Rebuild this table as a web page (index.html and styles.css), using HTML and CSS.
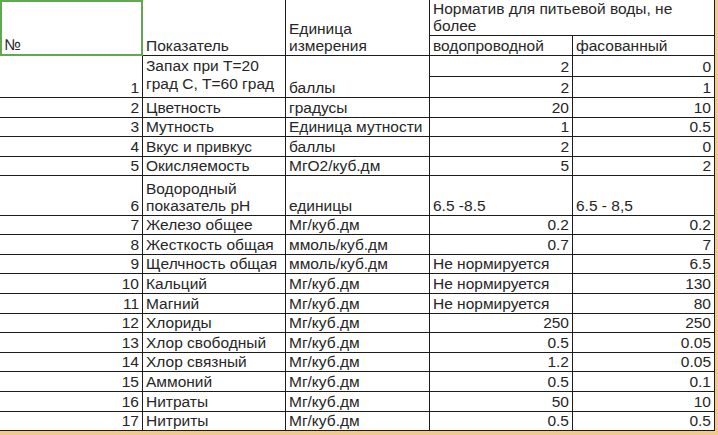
FILE: index.html
```html
<!DOCTYPE html>
<html lang="ru">
<head>
<meta charset="utf-8">
<title>Нормативы питьевой воды</title>
<link rel="stylesheet" href="styles.css">
</head>
<body>
<div class="sheet">
<table class="grid">
<colgroup>
<col class="c1"><col class="c2"><col class="c3"><col class="c4"><col class="c5">
</colgroup>
<tbody>
<tr class="h-top">
  <td class="sel" rowspan="2">№</td>
  <td class="txt" rowspan="2">Показатель</td>
  <td class="txt" rowspan="2">Единица<br>измерения</td>
  <td class="txt norm" colspan="2">Норматив для питьевой воды, не<br>более</td>
</tr>
<tr class="h-sub">
  <td class="txt">водопроводной</td>
  <td class="txt">фасованный</td>
</tr>
<tr class="r-half">
  <td class="num" rowspan="2">1</td>
  <td class="txt top" rowspan="2"><div class="clip">Запах при Т=20 град С, Т=60 град С</div></td>
  <td class="txt" rowspan="2">баллы</td>
  <td class="num">2</td>
  <td class="num">0</td>
</tr>
<tr class="r-half">
  <td class="num">2</td>
  <td class="num">1</td>
</tr>
<tr class="r"><td class="num">2</td><td class="txt">Цветность</td><td class="txt">градусы</td><td class="num">20</td><td class="num">10</td></tr>
<tr class="r"><td class="num">3</td><td class="txt">Мутность</td><td class="txt">Единица мутности</td><td class="num">1</td><td class="num">0.5</td></tr>
<tr class="r"><td class="num">4</td><td class="txt">Вкус и привкус</td><td class="txt">баллы</td><td class="num">2</td><td class="num">0</td></tr>
<tr class="r"><td class="num">5</td><td class="txt">Окисляемость</td><td class="txt">МгО2/куб.дм</td><td class="num">5</td><td class="num">2</td></tr>
<tr class="r-dbl"><td class="num">6</td><td class="txt wrap">Водородный показатель рН</td><td class="txt">единицы</td><td class="txt">6.5 -8.5</td><td class="txt">6.5 - 8,5</td></tr>
<tr class="r"><td class="num">7</td><td class="txt">Железо общее</td><td class="txt">Мг/куб.дм</td><td class="num">0.2</td><td class="num">0.2</td></tr>
<tr class="r"><td class="num">8</td><td class="txt">Жесткость общая</td><td class="txt">ммоль/куб.дм</td><td class="num">0.7</td><td class="num">7</td></tr>
<tr class="r"><td class="num">9</td><td class="txt">Щелчность общая</td><td class="txt">ммоль/куб.дм</td><td class="txt">Не нормируется</td><td class="num">6.5</td></tr>
<tr class="r"><td class="num">10</td><td class="txt">Кальций</td><td class="txt">Мг/куб.дм</td><td class="txt">Не нормируется</td><td class="num">130</td></tr>
<tr class="r"><td class="num">11</td><td class="txt">Магний</td><td class="txt">Мг/куб.дм</td><td class="txt">Не нормируется</td><td class="num">80</td></tr>
<tr class="r"><td class="num">12</td><td class="txt">Хлориды</td><td class="txt">Мг/куб.дм</td><td class="num">250</td><td class="num">250</td></tr>
<tr class="r"><td class="num">13</td><td class="txt">Хлор свободный</td><td class="txt">Мг/куб.дм</td><td class="num">0.5</td><td class="num">0.05</td></tr>
<tr class="r"><td class="num">14</td><td class="txt">Хлор связный</td><td class="txt">Мг/куб.дм</td><td class="num">1.2</td><td class="num">0.05</td></tr>
<tr class="r"><td class="num">15</td><td class="txt">Аммоний</td><td class="txt">Мг/куб.дм</td><td class="num">0.5</td><td class="num">0.1</td></tr>
<tr class="r"><td class="num">16</td><td class="txt">Нитраты</td><td class="txt">Мг/куб.дм</td><td class="num">50</td><td class="num">10</td></tr>
<tr class="r"><td class="num">17</td><td class="txt">Нитриты</td><td class="txt">Мг/куб.дм</td><td class="num">0.5</td><td class="num">0.5</td></tr>
</tbody>
</table>
</div>
</body>
</html>
```
FILE: styles.css
```css
html, body {
  margin: 0;
  padding: 0;
  background: #ffffff;
}

.sheet {
  width: 715px;
  border-right: 3px solid #f3c88c;
  border-bottom: 4px solid #f3c88c;
}

.grid {
  width: 715px;
  table-layout: fixed;
  border-collapse: separate;
  border-spacing: 0;
  font-family: "Liberation Sans", Arial, sans-serif;
  font-size: 15.5px;
  line-height: 17px;
  color: #262626;
}

.c1 { width: 143px; }
.c2 { width: 143px; }
.c3 { width: 144px; }
.c4 { width: 143px; }
.c5 { width: 142px; }

.grid td {
  padding: 0 3px 1px 3px;
  vertical-align: bottom;
  white-space: nowrap;
  overflow: hidden;
  border-right: 1px solid #1c1c1c;
  border-bottom: 1px solid #1c1c1c;
}

.grid td.txt { text-align: left; }
.grid td.num { text-align: right; }
.grid td.wrap { white-space: normal; }
.grid td.top { vertical-align: top; padding-top: 1px; }

.clip {
  height: 39px;
  overflow: hidden;
  white-space: normal;
  line-height: 18px;
}

.grid td.sel {
  border: 2px solid #62a851;
  padding-left: 2px;
}

.h-top { height: 36px; }
.h-sub { height: 20px; }
.r-half { height: 20.5px; }
.r { height: 19.6px; }
.r-dbl { height: 39.3px; }
```
